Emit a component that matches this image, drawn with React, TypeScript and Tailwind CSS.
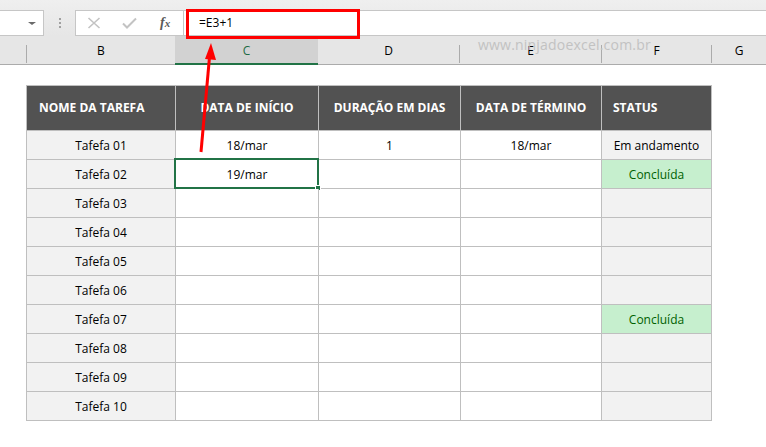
const font = { fontFamily: '"Open Sans", "Noto Sans", sans-serif' };

const rows: string[][] = [
  ['Tafefa 01', '18/mar', '1', '18/mar', 'Em andamento'],
  ['Tafefa 02', '19/mar', '', '', 'Concluída'],
  ['Tafefa 03', '', '', '', ''],
  ['Tafefa 04', '', '', '', ''],
  ['Tafefa 05', '', '', '', ''],
  ['Tafefa 06', '', '', '', ''],
  ['Tafefa 07', '', '', '', 'Concluída'],
  ['Tafefa 08', '', '', '', ''],
  ['Tafefa 09', '', '', '', ''],
  ['Tafefa 10', '', '', '', ''],
];

const Sep = () => <div className="w-px h-[18px] bg-[#ababab] self-end mb-px" />;

const App = () => {
  return (
    <div
      className="relative w-[766px] h-[447px] bg-white overflow-hidden text-black"
      style={font}
    >
      {/* formula bar */}
      <div className="h-[36px] bg-gradient-to-b from-[#efefef] to-[#e6e6e6] flex items-start pt-[10px]">
        <div className="w-[44px] h-[26px] bg-white border border-l-0 border-[#c6c6c6] flex items-center justify-end pr-[7px]">
          <div className="w-0 h-0 border-l-[4px] border-r-[4px] border-t-[3px] border-l-transparent border-r-transparent border-t-[#6a6a6a]" />
        </div>
        <div className="w-[31px] h-[26px] flex flex-col items-center justify-center gap-[2px]">
          <div className="w-[2px] h-[2px] bg-[#a0a0a0]" />
          <div className="w-[2px] h-[2px] bg-[#a0a0a0]" />
          <div className="w-[2px] h-[2px] bg-[#a0a0a0]" />
        </div>
        <div className="w-[109px] h-[26px] bg-white border border-[#c6c6c6] flex items-center">
          <svg width="14" height="12" viewBox="0 0 14 12" className="ml-[11px]">
            <path d="M1.5 1 L12.5 11 M12.5 1 L1.5 11" stroke="#c3c3c3" strokeWidth="1.6" fill="none" />
          </svg>
          <svg width="15" height="12" viewBox="0 0 15 12" className="ml-[21px]">
            <path d="M1 6.5 L5 10.5 L14 1.5" stroke="#c3c3c3" strokeWidth="2" fill="none" />
          </svg>
          <span
            className="ml-[23px] italic font-bold text-[14px] text-[#5a5a5a] leading-none"
            style={{ fontFamily: '"Liberation Serif", serif' }}
          >
            f<span className="text-[11px]">x</span>
          </span>
        </div>
        <div className="flex-1 h-[26px] bg-white border-t border-b border-[#c6c6c6] flex items-center pl-[15px] text-[12px]">
          =E3+1
        </div>
      </div>

      {/* column headings */}
      <div className="h-[29px] bg-[#e6e6e6] border-b border-[#ababab] flex text-[12px]">
        <div className="w-[26px]" />
        <Sep />
        <div className="w-[148px] flex items-end justify-center pb-[4px]">B</div>
        <div className="w-[143px] bg-[#d2d2d2] border-b-2 border-[#217346] -mb-px flex items-end justify-center pb-[3px] text-[#1e6b45]">
          C
        </div>
        <div className="w-[141px] flex items-end justify-center pb-[4px]">D</div>
        <Sep />
        <div className="w-[141px] flex items-end justify-center pb-[4px]">E</div>
        <Sep />
        <div className="w-[109px] flex items-end justify-center pb-[4px]">F</div>
        <Sep />
        <div className="flex-1 flex items-end justify-center pb-[4px]">G</div>
      </div>

      {/* table */}
      <div className="pt-[20px] pl-[26px]">
        <div className="grid grid-cols-[149px_143px_142px_141px_110px] w-[686px] border-l border-t border-[#bfbfbf] text-[12px]">
          <div className="h-[45px] bg-[#525252] border-r border-b border-[#bfbfbf] text-white font-bold flex items-center pl-[12px]">
            NOME DA TAREFA
          </div>
          <div className="h-[45px] bg-[#525252] border-r border-b border-[#bfbfbf] text-white font-bold flex items-center justify-center">
            DATA DE INÍCIO
          </div>
          <div className="h-[45px] bg-[#525252] border-r border-b border-[#bfbfbf] text-white font-bold flex items-center justify-center">
            DURAÇÃO EM DIAS
          </div>
          <div className="h-[45px] bg-[#525252] border-r border-b border-[#bfbfbf] text-white font-bold flex items-center justify-center">
            DATA DE TÉRMINO
          </div>
          <div className="h-[45px] bg-[#525252] border-r border-b border-[#bfbfbf] text-white font-bold flex items-center pl-[11px]">
            STATUS
          </div>
          {rows.map((r, i) => (
            <div className="contents" key={i}>
              <div className="h-[29px] pt-px bg-[#f2f2f2] border-r border-b border-[#bfbfbf] flex items-center justify-center">
                {r[0]}
              </div>
              <div className="relative h-[29px] pt-px bg-white border-r border-b border-[#bfbfbf] flex items-center justify-center">
                {r[1]}
                {i === 1 && (
                  <div className="absolute -left-[2px] -top-[2px] -right-px -bottom-px border-2 border-[#217346]">
                    <div className="absolute -right-[4px] -bottom-[4px] w-[6px] h-[6px] bg-[#217346] border border-white" />
                  </div>
                )}
              </div>
              <div className="h-[29px] pt-px bg-white border-r border-b border-[#bfbfbf] flex items-center justify-center">
                {r[2]}
              </div>
              <div className="h-[29px] pt-px bg-white border-r border-b border-[#bfbfbf] flex items-center justify-center">
                {r[3]}
              </div>
              <div
                className={
                  r[4] === 'Concluída'
                    ? 'h-[29px] pt-px bg-[#c6efce] text-[#006100] border-r border-b border-[#bfbfbf] flex items-center justify-center'
                    : 'h-[29px] pt-px bg-[#f2f2f2] border-r border-b border-[#bfbfbf] flex items-center justify-center'
                }
              >
                {r[4]}
              </div>
            </div>
          ))}
        </div>
      </div>

      {/* annotations */}
      <div className="absolute left-[186px] top-[9px] w-[174px] h-[30px] border-[3px] border-[#ff0000]" />
      <div className="absolute left-[478px] top-[34px] text-[14px] text-[#c2c2c2] tracking-[0.2px]">
        www.ninjadoexcel.com.br
      </div>
      <svg className="absolute left-0 top-0 pointer-events-none" width="766" height="447">
        <line x1="201" y1="152" x2="209.6" y2="56" stroke="#ff0000" strokeWidth="3" />
        <polygon points="211,43 205,59 216,60" fill="#ff0000" />
      </svg>
    </div>
  );
};

export default App;
